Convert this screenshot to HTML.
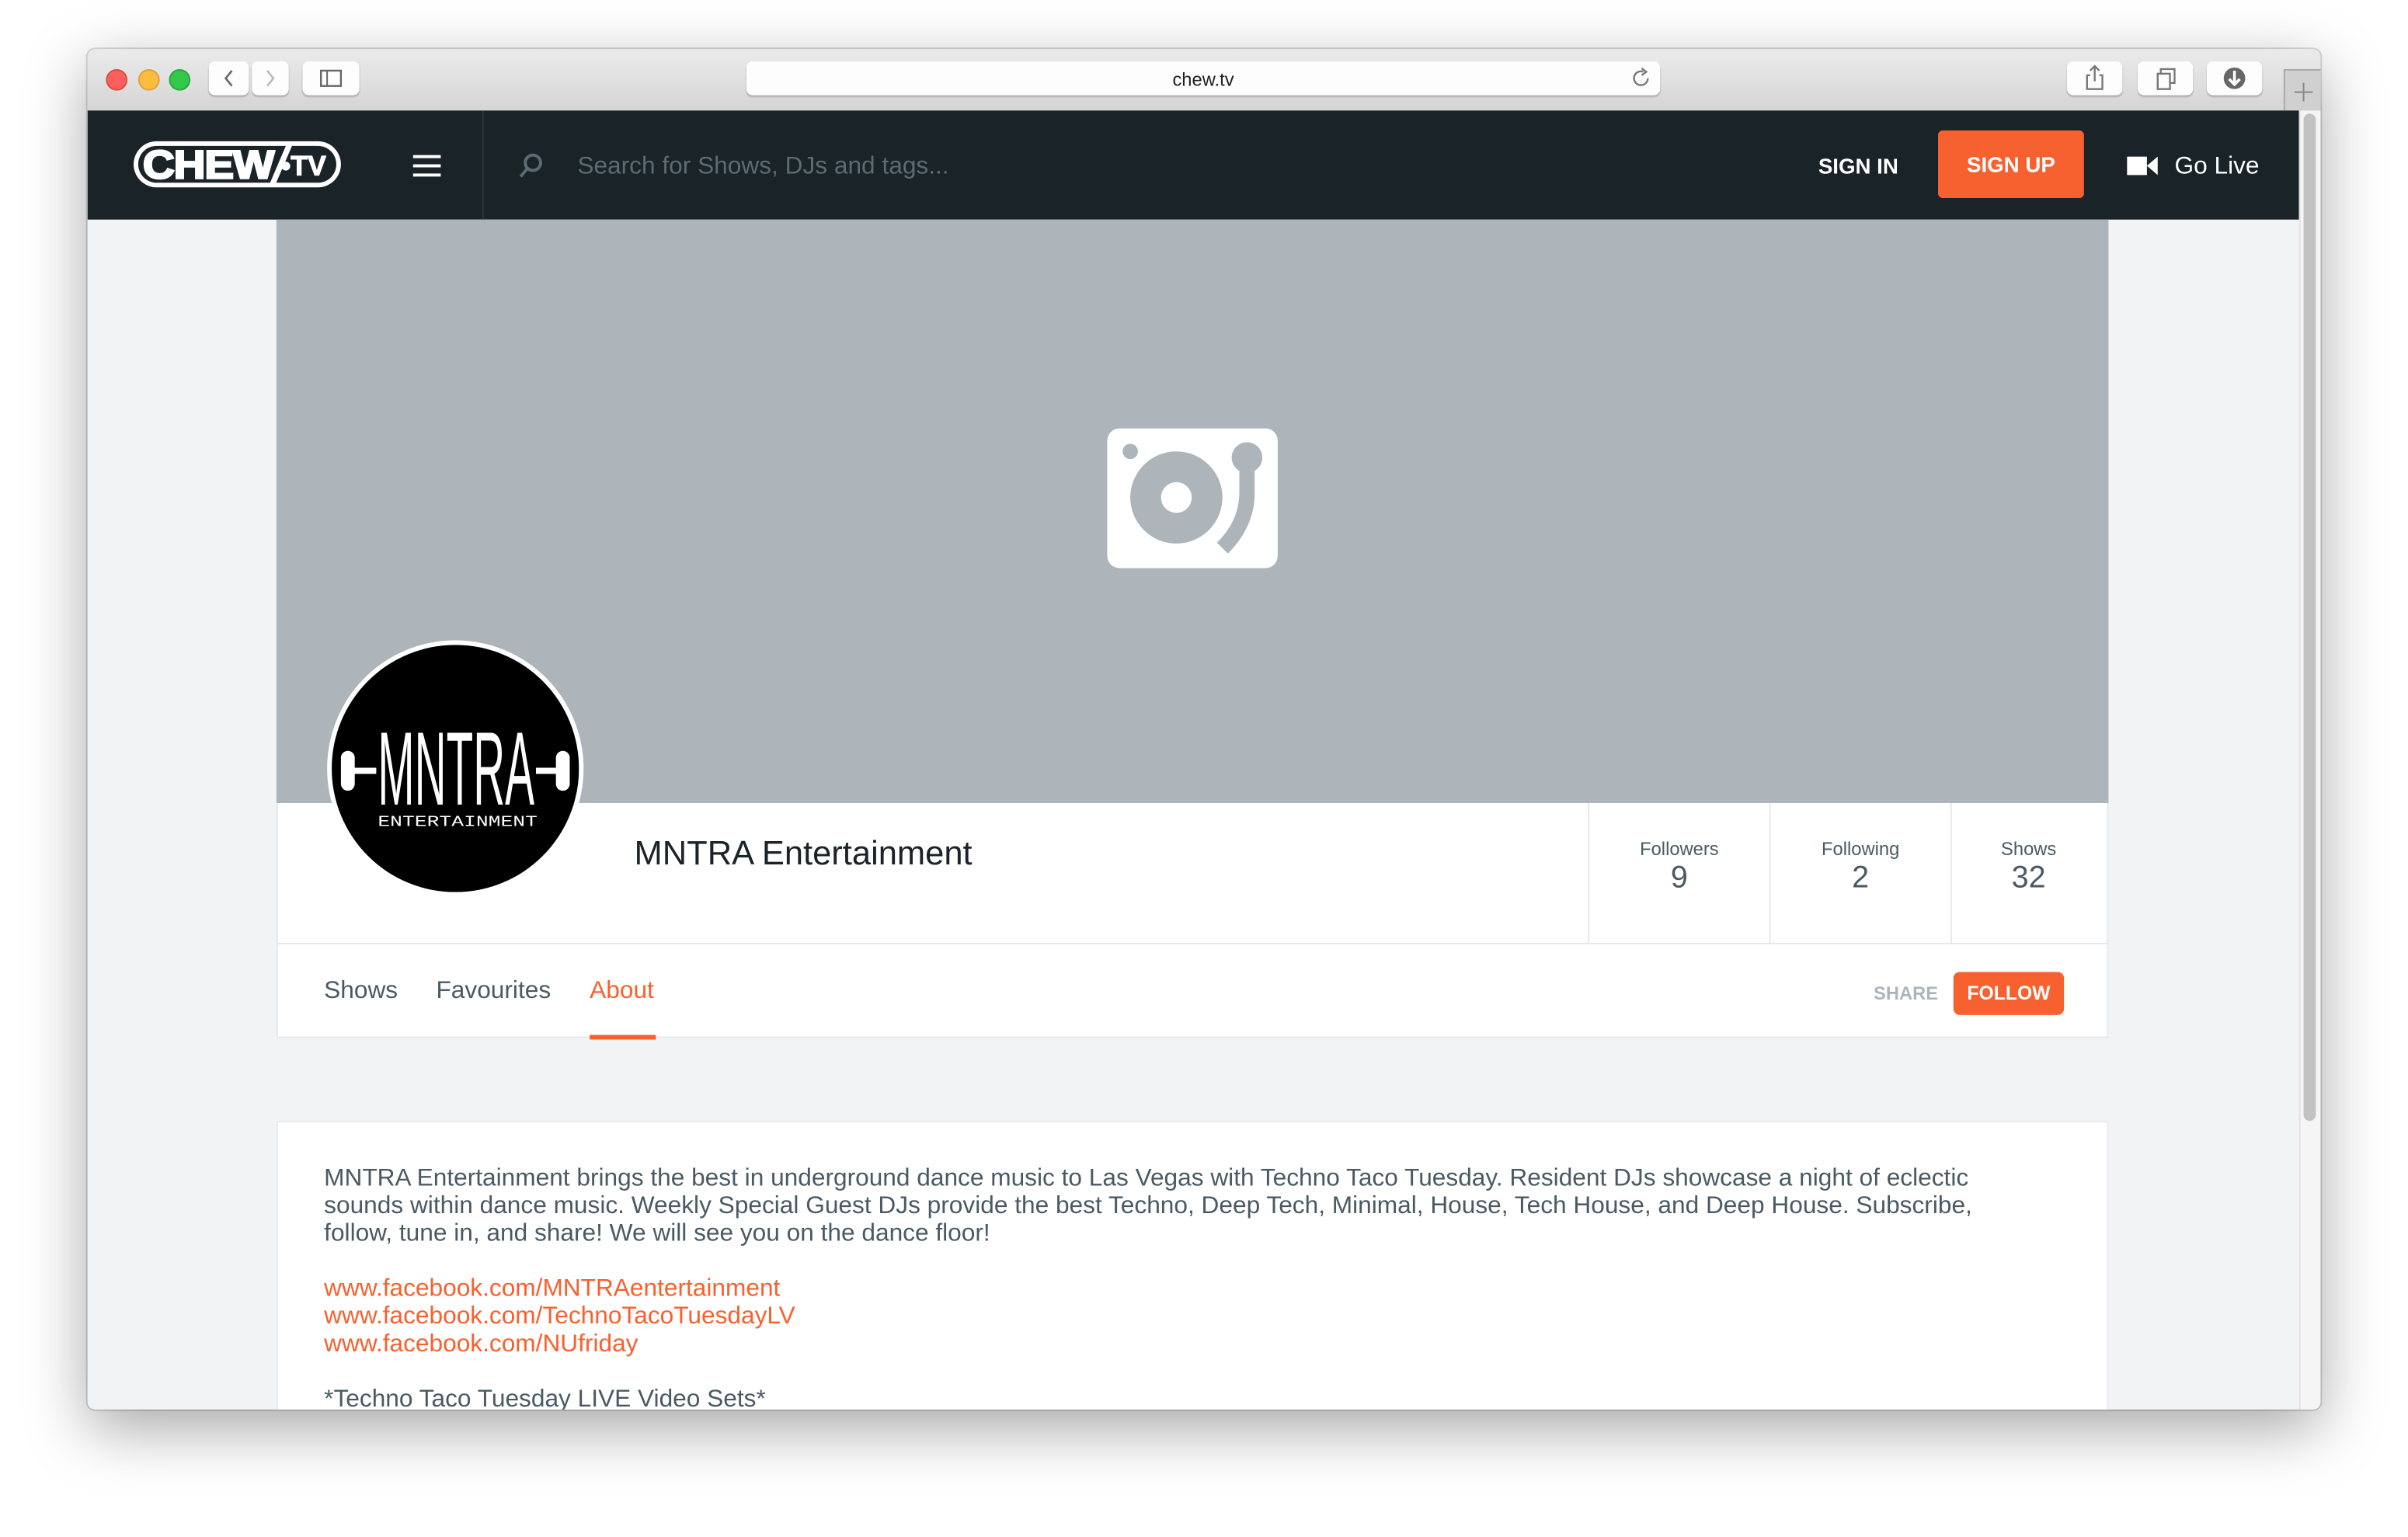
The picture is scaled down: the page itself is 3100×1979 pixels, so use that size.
<!DOCTYPE html>
<html><head><meta charset="utf-8">
<style>
html,body{margin:0;padding:0;background:#fff;overflow:hidden;width:3100px;height:1978px}
#s{position:absolute;left:0;top:0;width:1568px;height:1001px;transform:scale(1.97704);transform-origin:0 0;font-family:"Liberation Sans",sans-serif}
.a{position:absolute}
.win{left:57px;top:32px;width:1454px;height:886px;border-radius:5px;overflow:hidden;box-shadow:0 12px 40px rgba(0,0,0,.35),0 0 0 1px rgba(0,0,0,.15);background:#f2f3f5}
.tb{left:0;top:0;width:1454px;height:40px;background:linear-gradient(#ebebeb,#d5d5d5);border-bottom:1px solid #b9b9b9}
.dot{width:12px;height:12px;border-radius:50%;top:13px}
.btn{background:#fdfdfd;border-radius:4px;box-shadow:0 1px 1px rgba(0,0,0,.2);top:8px;height:22px}
.nav{left:0;top:40px;width:1440px;height:71px;background:#1a2328}
.t{white-space:nowrap}
</style></head><body><div id="s">
<div class="a win">
 <div class="a tb">
  <div class="a dot" style="left:12px;background:#fc605c;border:0.5px solid #de4a45"></div>
  <div class="a dot" style="left:33px;background:#fdbc40;border:0.5px solid #dea236"></div>
  <div class="a dot" style="left:53px;background:#34c84a;border:0.5px solid #2aa83b"></div>
  <div class="a btn" style="left:79px;width:26px"><svg width="26" height="22"><path d="M15 6 L11 11 L15 16" stroke="#666" fill="none" stroke-width="1.3"/></svg></div>
  <div class="a btn" style="left:107px;width:24px"><svg width="24" height="22"><path d="M10 6 L14 11 L10 16" stroke="#bbb" fill="none" stroke-width="1.3"/></svg></div>
  <div class="a btn" style="left:140px;width:37px"><svg width="37" height="22"><rect x="12" y="6" width="13" height="10" fill="none" stroke="#666" stroke-width="1.2"/><line x1="16" y1="6" x2="16" y2="16" stroke="#666"/></svg></div>
  <div class="a btn" style="left:429px;width:595px;text-align:center;font-size:12px;line-height:24px;color:#222">chew.tv</div>
  <svg class="a" style="left:1005px;top:12px" width="14" height="14"><path d="M11 7 A4.5 4.5 0 1 1 8 2.7" stroke="#777" fill="none" stroke-width="1.2"/><path d="M7 0.5 L10 2.8 L7 5" stroke="#777" fill="none" stroke-width="1.2"/></svg>
  <div class="a btn" style="left:1289px;width:36px"><svg width="36" height="22"><path d="M15 9 H13 V18 H23 V9 H21 M18 13 V3 M15 6 L18 3 L21 6" stroke="#777" fill="none" stroke-width="1.2"/></svg></div>
  <div class="a btn" style="left:1335px;width:36px"><svg width="36" height="22"><rect x="13" y="8" width="8" height="10" fill="none" stroke="#777" stroke-width="1.2"/><path d="M15 8 V5 H24 V14 H21" stroke="#777" fill="none" stroke-width="1.2"/></svg></div>
  <div class="a btn" style="left:1380px;width:36px"><svg width="36" height="22"><circle cx="18" cy="11" r="7" fill="#666"/><path d="M18 6 V15 M14.5 11.5 L18 15 L21.5 11.5" stroke="#fff" fill="none" stroke-width="1.8"/></svg></div>
  <div class="a" style="left:1430px;top:13px;width:24px;height:27px;background:#d0d0d0;border-left:1px solid #aaa;border-top:1px solid #aaa"><svg width="24" height="27"><path d="M12 8 V20 M6 14 H18" stroke="#888" stroke-width="1"/></svg></div>
 </div>
 <div class="a nav">
  <div class="a" style="left:257px;top:0;width:1px;height:71px;background:#2b363c"></div>
  <div class="a" style="left:30px;top:20px;width:135px;height:30px;border-radius:15px;background:#fff"></div>
  <div class="a" style="left:33px;top:23px;width:129px;height:24px;border-radius:12px;background:#1a2328"></div>
  <svg class="a" style="left:30px;top:20px" width="135" height="30"><path d="M88 29 L100 1 L104 1 L92 29 Z" fill="#fff"/></svg>
  <div class="a t" style="left:36px;top:21px;font-size:26px;font-weight:900;color:#fff;letter-spacing:-0.5px;transform:scaleX(1.1);transform-origin:0 0;line-height:29px;-webkit-text-stroke:1.3px #fff">CHEW</div>
  <div class="a t" style="left:126px;top:25px;font-size:18px;font-weight:900;color:#fff;line-height:22px;-webkit-text-stroke:0.6px #fff">•TV</div>
  <div class="a" style="left:212px;top:29px;width:18px;height:2px;background:#fff;box-shadow:0 6px 0 #fff,0 12px 0 #fff"></div>
  <svg class="a" style="left:279px;top:26px" width="20" height="20"><circle cx="11" cy="8" r="5" stroke="#5d6a72" stroke-width="2" fill="none"/><path d="M7.5 11.5 L3 17" stroke="#5d6a72" stroke-width="2"/></svg>
  <div class="a t" style="left:319px;top:27px;font-size:16px;color:#5d6a72;line-height:20px">Search for Shows, DJs and tags...</div>
  <div class="a t" style="left:1127px;top:27px;font-size:14px;font-weight:bold;color:#fff;line-height:18px">SIGN IN</div>
  <div class="a" style="left:1205px;top:13px;width:95px;height:44px;border-radius:3px;background:#f7612f;color:#fff;font-weight:bold;font-size:14px;text-align:center;line-height:44px">SIGN UP</div>
  <svg class="a" style="left:1328px;top:29px" width="22" height="14"><rect x="0" y="1" width="13" height="12" fill="#fff"/><path d="M13 7 L20 1 V13 Z" fill="#fff"/></svg>
  <div class="a t" style="left:1359px;top:27px;font-size:16px;color:#fff;line-height:20px">Go Live</div>
 </div>
 <div class="a" style="left:1440px;top:40px;width:14px;height:846px;background:#f5f5f5;border-left:1px solid #e2e2e2"></div>
 <div class="a" style="left:1443px;top:42px;width:8px;height:656px;border-radius:4px;background:#c2c2c2"></div>

 <div class="a" style="left:123px;top:111px;width:1193px;height:380px;background:#adb5bb"></div>
 <div class="a" style="left:664px;top:247px;width:111px;height:91px;border-radius:8px;background:#fff"></div>
 <svg class="a" style="left:664px;top:247px" width="111" height="91"><circle cx="15" cy="15" r="5" fill="#adb5bb"/><circle cx="45" cy="45" r="30" fill="#adb5bb"/><circle cx="45" cy="45" r="10" fill="#fff"/><circle cx="91" cy="19" r="10" fill="#adb5bb"/><path d="M91 20 V42 Q91 62 75 78" stroke="#adb5bb" stroke-width="10" fill="none"/></svg>

 <div class="a" style="left:123px;top:491px;width:1193px;height:153px;background:#fff;border:1px solid #e5e8eb;border-top:0;box-sizing:border-box"></div>
 <div class="a" style="left:123px;top:582px;width:1193px;height:1px;background:#e5e8eb"></div>
 <div class="a" style="left:977px;top:491px;width:1px;height:91px;background:#e5e8eb"></div>
 <div class="a" style="left:1095px;top:491px;width:1px;height:91px;background:#e5e8eb"></div>
 <div class="a" style="left:1213px;top:491px;width:1px;height:91px;background:#e5e8eb"></div>
 <div class="a" style="left:978px;top:514px;width:117px;text-align:center;color:#4a5a63"><div style="font-size:12px">Followers</div><div style="font-size:20px;line-height:24px">9</div></div>
 <div class="a" style="left:1096px;top:514px;width:117px;text-align:center;color:#4a5a63"><div style="font-size:12px">Following</div><div style="font-size:20px;line-height:24px">2</div></div>
 <div class="a" style="left:1214px;top:514px;width:100px;text-align:center;color:#4a5a63"><div style="font-size:12px">Shows</div><div style="font-size:20px;line-height:24px">32</div></div>
 <div class="a t" style="left:356px;top:511px;font-size:22px;color:#1a2328;line-height:26px">MNTRA Entertainment</div>

 <div class="a" style="left:156px;top:385px;width:167px;height:167px;border-radius:50%;background:#fff"></div>
 <svg class="a" style="left:159px;top:388px" width="161" height="161">
  <circle cx="80.5" cy="80.5" r="80.5" fill="#000"/>
  <rect x="6" y="69" width="9" height="26" rx="4.5" fill="#fff"/><rect x="146" y="69" width="9" height="26" rx="4.5" fill="#fff"/>
  <rect x="13" y="80" width="135" height="4" fill="#fff"/>
  <rect x="29" y="50" width="104" height="58" fill="#000"/>
  <text x="30" y="104" font-family="Liberation Sans, sans-serif" font-size="68" fill="#fff" textLength="102" lengthAdjust="spacingAndGlyphs">MNTRA</text>
  <text x="30" y="118" font-family="Liberation Mono, monospace" font-size="10" fill="#fff" textLength="104" lengthAdjust="spacingAndGlyphs">ENTERTAINMENT</text>
 </svg>

 <div class="a t" style="left:154px;top:604px;font-size:16px;color:#4a5a63;line-height:20px">Shows</div>
 <div class="a t" style="left:227px;top:604px;font-size:16px;color:#4a5a63;line-height:20px">Favourites</div>
 <div class="a t" style="left:327px;top:604px;font-size:16px;color:#f7612f;line-height:20px">About</div>
 <div class="a" style="left:327px;top:642px;width:43px;height:3px;background:#f7612f"></div>
 <div class="a t" style="left:1163px;top:608px;font-size:12px;font-weight:bold;color:#adb5bb;line-height:14px">SHARE</div>
 <div class="a" style="left:1215px;top:601px;width:72px;height:28px;border-radius:4px;background:#f7612f;color:#fff;font-weight:bold;font-size:12.5px;text-align:center;line-height:28px">FOLLOW</div>

 <div class="a" style="left:123px;top:698px;width:1193px;height:200px;background:#fff;border:1px solid #e8eaed;box-sizing:border-box"></div>
 <div class="a" style="left:154px;top:727px;width:1110px;font-size:16px;line-height:18px;color:#4a5a63">MNTRA Entertainment brings the best in underground dance music to Las Vegas with Techno Taco Tuesday. Resident DJs showcase a night of eclectic sounds within dance music. Weekly Special Guest DJs provide the best Techno, Deep Tech, Minimal, House, Tech House, and Deep House. Subscribe, follow, tune in, and share! We will see you on the dance floor!<br><br><span style="color:#f7612f">www.facebook.com/MNTRAentertainment<br>www.facebook.com/TechnoTacoTuesdayLV<br>www.facebook.com/NUfriday</span><br><br>*Techno Taco Tuesday LIVE Video Sets*</div>
</div>
</div></body></html>
